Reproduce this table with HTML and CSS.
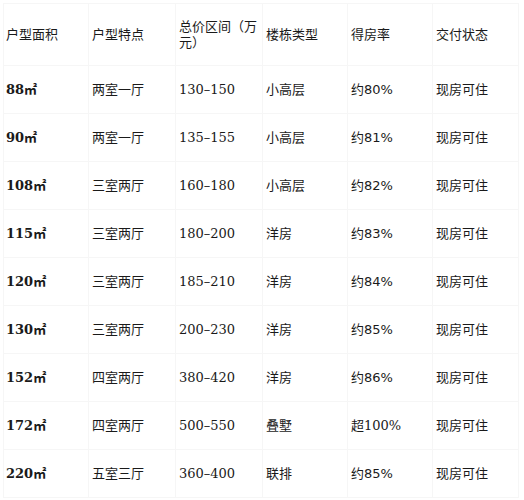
FILE: index.html
```html
<!DOCTYPE html>
<html lang="zh">
<head>
<meta charset="utf-8">
<link rel="stylesheet" href="styles.css">
</head>
<body>
<table class="spec">
  <colgroup>
    <col class="c1"><col class="c2"><col class="c3"><col class="c4"><col class="c5"><col class="c6">
  </colgroup>
  <thead>
    <tr class="head">
      <th>户型面积</th><th>户型特点</th><th>总价区间（万元）</th><th>楼栋类型</th><th>得房率</th><th>交付状态</th>
    </tr>
  </thead>
  <tbody>
    <tr><td class="area">88<span class="unit">㎡</span></td><td>两室一厅</td><td class="num">130–150</td><td>小高层</td><td class="rate">约80%</td><td>现房可住</td></tr>
    <tr><td class="area">90<span class="unit">㎡</span></td><td>两室一厅</td><td class="num">135–155</td><td>小高层</td><td class="rate">约81%</td><td>现房可住</td></tr>
    <tr><td class="area">108<span class="unit">㎡</span></td><td>三室两厅</td><td class="num">160–180</td><td>小高层</td><td class="rate">约82%</td><td>现房可住</td></tr>
    <tr><td class="area">115<span class="unit">㎡</span></td><td>三室两厅</td><td class="num">180–200</td><td>洋房</td><td class="rate">约83%</td><td>现房可住</td></tr>
    <tr><td class="area">120<span class="unit">㎡</span></td><td>三室两厅</td><td class="num">185–210</td><td>洋房</td><td class="rate">约84%</td><td>现房可住</td></tr>
    <tr><td class="area">130<span class="unit">㎡</span></td><td>三室两厅</td><td class="num">200–230</td><td>洋房</td><td class="rate">约85%</td><td>现房可住</td></tr>
    <tr><td class="area">152<span class="unit">㎡</span></td><td>四室两厅</td><td class="num">380–420</td><td>洋房</td><td class="rate">约86%</td><td>现房可住</td></tr>
    <tr><td class="area">172<span class="unit">㎡</span></td><td>四室两厅</td><td class="num">500–550</td><td>叠墅</td><td class="num">超100%</td><td>现房可住</td></tr>
    <tr><td class="area">220<span class="unit">㎡</span></td><td>五室三厅</td><td class="num">360–400</td><td>联排</td><td class="rate">约85%</td><td>现房可住</td></tr>
  </tbody>
</table>
</body>
</html>
```
FILE: styles.css
```css
html, body {
  margin: 0;
  padding: 0;
  background: #ffffff;
}
body {
  padding: 3px;
  font-family: "DejaVu Sans", "Noto Sans CJK SC", sans-serif;
  font-size: 13px;
  color: #1a1a1a;
}
.spec {
  border-collapse: collapse;
  table-layout: fixed;
  width: 515px;
}
.c1 { width: 85px; }
.c2 { width: 87px; }
.c3 { width: 87px; }
.c4 { width: 85px; }
.c5 { width: 85px; }
.c6 { width: 86px; }
.spec th, .spec td {
  border: 1px solid #f6f6f6;
  padding: 0 4px 0 3px;
  text-align: left;
  vertical-align: middle;
  line-height: 16px;
  height: 47px;
}
.spec th {
  font-weight: normal;
  height: 61px;
}
.spec td:first-child, .spec th:first-child {
  padding-left: 2px;
}
.area {
  font-family: "DejaVu Serif", "Noto Sans CJK SC", serif;
  font-weight: bold;
}
.unit {
  font-family: "Noto Sans CJK SC", sans-serif;
  font-weight: bold;
}
.num {
  font-family: "DejaVu Serif", "Noto Sans CJK SC", serif;
}
.rate {
  font-family: "DejaVu Sans", "Noto Sans CJK SC", sans-serif;
}
```
